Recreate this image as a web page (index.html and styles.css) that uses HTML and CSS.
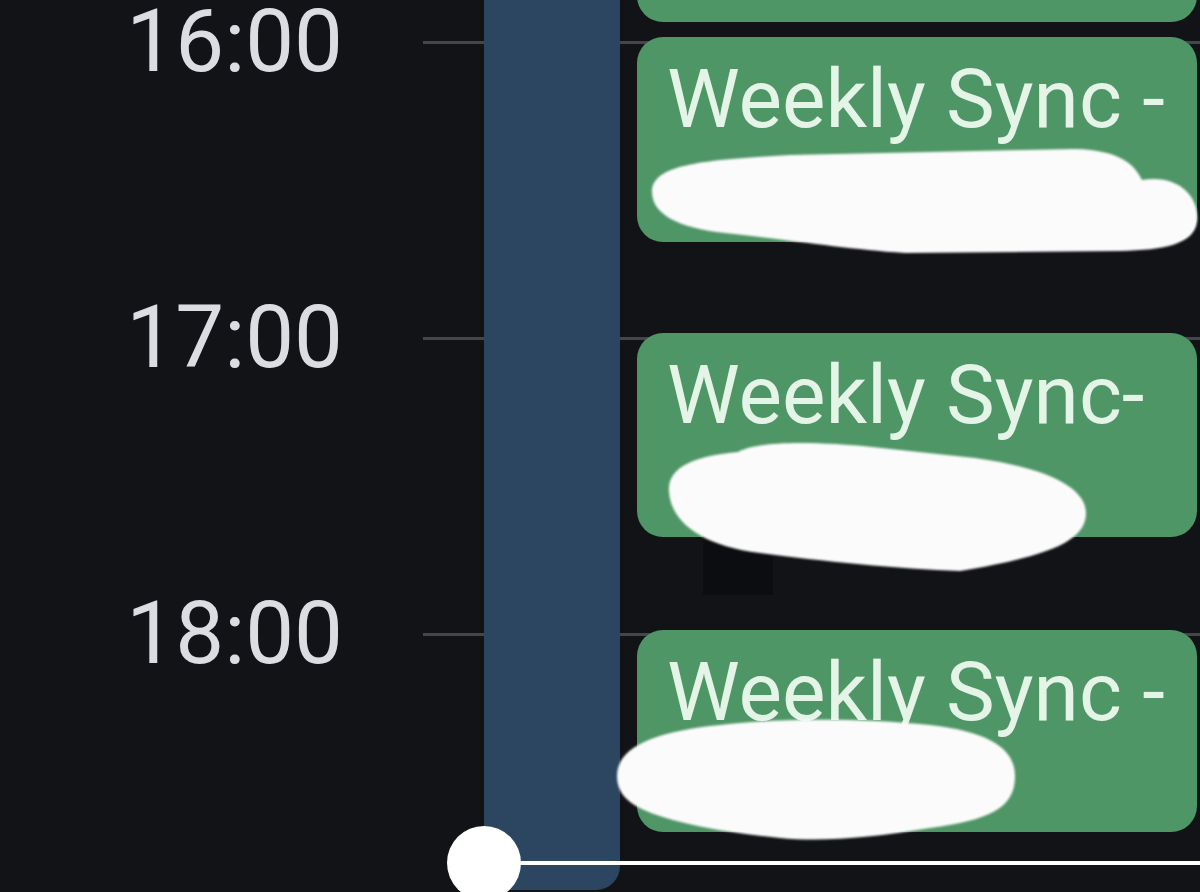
FILE: index.html
```html
<!DOCTYPE html>
<html>
<head>
  <meta charset="utf-8">
  <title>Day view</title>
  <link rel="stylesheet" href="styles.css">
</head>
<body>

<div class="calendar">
  <div class="gutter">
    <div class="time">16:00</div>
    <div class="time">17:00</div>
    <div class="time">18:00</div>
    <div class="time">19:00</div>
  </div>

  <div class="grid">
    <div class="spacer"></div>
    <div class="today"></div>
    <div class="events">
      <div class="event" style="top:-180px; height:202px"></div>
      <div class="event" style="top:37px; height:205px">
        <div class="title">Weekly Sync -</div>
      </div>
      <div class="event" style="top:333px; height:204px">
        <div class="title">Weekly Sync-</div>
      </div>
      <div class="event" style="top:630px; height:202px">
        <div class="title">Weekly Sync -</div>
      </div>
      <div class="smudge"></div>
    </div>
    <div class="now"></div>
  </div>
</div>

<!-- scribbled-out second lines -->
<svg class="scribbles" viewBox="0 0 1200 892" width="1200" height="892">
  <defs>
    <filter id="soft"><feGaussianBlur stdDeviation="1.3"/></filter>
  </defs>
  <g fill="#fbfbfb" filter="url(#soft)">
    <path d="M 652 192 C 652 165, 700 160, 790 155 L 1075 149 C 1120 150, 1135 165, 1142 180 C 1180 174, 1200 198, 1197 222 C 1194 244, 1165 250, 1120 251 L 905 253 C 845 249, 800 241, 725 233 C 678 228, 652 214, 652 192 Z"/>
    <path d="M 669 492 C 667 466, 696 456, 738 452 C 760 440, 820 442, 872 447 L 975 458 C 1048 468, 1086 488, 1086 513 C 1086 541, 1050 556, 960 571 C 900 569, 820 561, 760 553 C 702 546, 671 522, 669 492 Z"/>
    <path d="M 617 776 C 617 745, 660 731, 720 725 C 780 718, 860 718, 930 725 C 992 732, 1016 750, 1015 778 C 1014 808, 990 820, 930 828 C 870 838, 822 842, 780 838 C 720 832, 662 821, 636 806 C 623 798, 617 789, 617 776 Z"/>
  </g>
</svg>

</body>
</html>
```

FILE: styles.css
```css
body {
  margin: 0;
  height: 892px;
  overflow: hidden;
  background-color: #121317;
  font-family: Roboto, "Liberation Sans", sans-serif;
}
.calendar {
  display: flex;
  height: 892px;
  overflow: hidden;
}
.gutter {
  width: 423px;
  flex-shrink: 0;
  margin-top: -107px;
}
.time {
  height: 296px;
  display: flex;
  align-items: center;
  justify-content: flex-end;
  padding-right: 80px;
  font-size: 87px;
  color: #dcdde2;
}
/* hour rules, one every 296px */
.grid {
  flex: 1;
  display: flex;
  gap: 17px;
  position: relative;
  background-image: linear-gradient(to bottom, #44464c 0 3px, transparent 3px);
  background-size: 100% 296px;
  background-position: 0 41px;
}
.spacer {
  width: 61px;
  margin-right: -17px;
}
.today {
  width: 136px;
  height: 890px;
  background-color: #2c4560;
  border-radius: 0 0 24px 24px;
}
.events {
  flex: 1;
  position: relative;
  margin-right: 3px;
}
.event {
  position: absolute;
  left: 0;
  right: 0;
  box-sizing: border-box;
  padding: 14px 0 0 30px;
  background-color: #4f9666;
  border-radius: 26px;
}
.title {
  font-size: 82px;
  line-height: 96px;
  color: #e4f5e8;
  white-space: nowrap;
}
.smudge {
  position: absolute;
  left: 66px;
  top: 515px;
  width: 70px;
  height: 80px;
  background-color: rgba(6, 7, 11, 0.5);
}
.now {
  position: absolute;
  left: 61px;
  right: 0;
  top: 861px;
  height: 4px;
  background-color: #fff;
}
.now::before {
  content: "";
  position: absolute;
  left: -37px;
  top: -35px;
  width: 74px;
  height: 74px;
  border-radius: 50%;
  background-color: #fff;
}
.scribbles {
  position: absolute;
  left: 0;
  top: 0;
}
```
